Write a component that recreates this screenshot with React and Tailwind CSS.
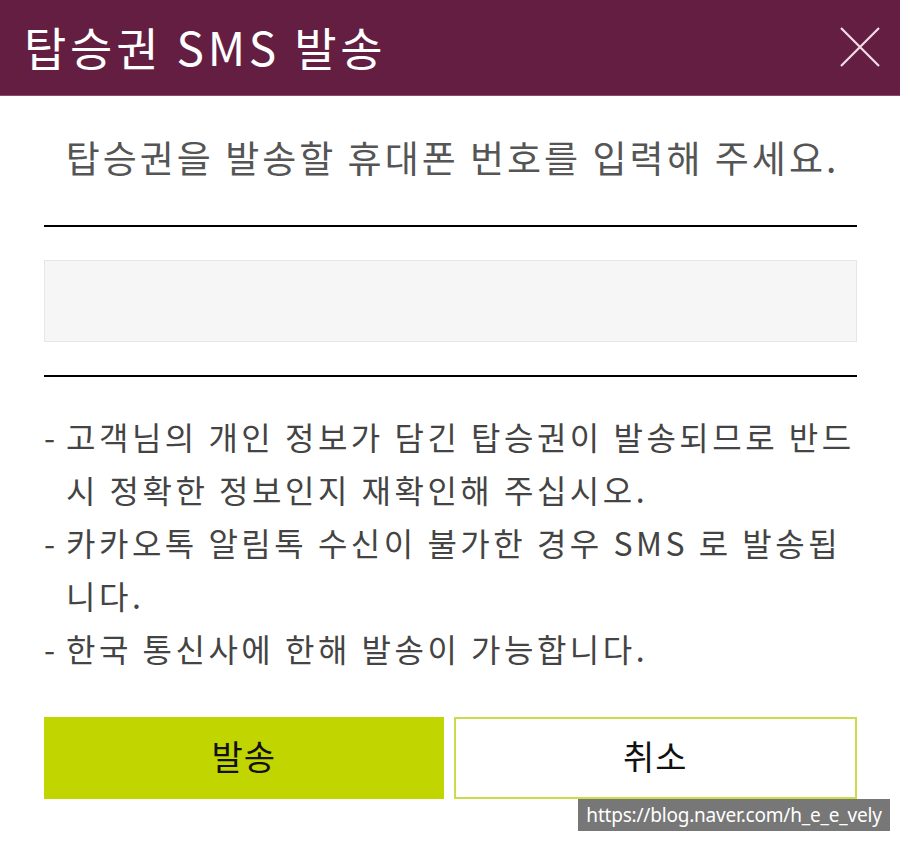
import React from 'react';

const notes = [
  ['고객님의 개인 정보가 담긴 탑승권이 발송되므로 반드', '시 정확한 정보인지 재확인해 주십시오.'],
  ['카카오톡 알림톡 수신이 불가한 경우 SMS 로 발송됩', '니다.'],
  ['한국 통신사에 한해 발송이 가능합니다.'],
];

const SmsDialog = () => {
  return (
    <div
      className="relative w-[900px] h-[841px] bg-white overflow-hidden"
      style={{ fontFamily: '"Noto Sans CJK KR", "Noto Sans", sans-serif' }}
    >
      {/* Header */}
      <div className="h-[96px] bg-[#641e42] border-b border-[#8a4a68] flex items-center justify-between pl-[24px] pr-[20px]">
        <h1 className="text-white text-[46px] leading-none tracking-[3.8px] pb-[4px]">탑승권 SMS 발송</h1>
        <svg width="40" height="40" viewBox="0 0 40 40" className="mb-[2px]">
          <path d="M1 1L39 39M39 1L1 39" stroke="#f4dce8" strokeWidth="2.2" />
        </svg>
      </div>

      <div className="px-[44px] pr-[43px]">
        {/* Prompt */}
        <p className="text-center text-[#555] text-[37px] leading-none tracking-[3px] pl-[4px] pt-[43px] pb-[49px] whitespace-nowrap">
          탑승권을 발송할 휴대폰 번호를 입력해 주세요.
        </p>

        <div className="h-[2px] bg-black" />
        <div className="py-[33px]">
          <input
            type="tel"
            className="block w-full h-[82px] bg-[#f6f6f6] border border-[#e6e6e6] outline-none px-4 text-[28px]"
          />
        </div>
        <div className="h-[2px] bg-black" />

        {/* Notes */}
        <div className="pt-[33px] text-[#444] text-[32px] leading-[53px] tracking-[3.5px] whitespace-nowrap">
          {notes.map((lines, i) => (
            <div key={i} className="flex">
              <span className="w-[22px] shrink-0 tracking-normal">-</span>
              <span>
                {lines.map((l, j) => (
                  <React.Fragment key={j}>
                    {j > 0 && <br />}
                    {l}
                  </React.Fragment>
                ))}
              </span>
            </div>
          ))}
        </div>

        {/* Buttons */}
        <div className="mt-[42px] flex gap-[10px]">
          <button className="flex-1 h-[82px] bg-[#c1d600] text-[#111] text-[34px] leading-none tracking-[1px] pb-[4px]">
            발송
          </button>
          <button className="flex-1 h-[82px] bg-white border-2 border-[#cbdb4a] text-[#111] text-[34px] leading-none tracking-[1px] pb-[4px]">
            취소
          </button>
        </div>
      </div>

      {/* Watermark */}
      <div
        className="absolute left-[578px] top-[799px] w-[312px] h-[32px] bg-[#777] text-white text-[19px] leading-[32px] tracking-[-0.2px] text-center"
        style={{ fontFamily: '"Noto Sans", sans-serif' }}
      >
        https://blog.naver.com/h_e_e_vely
      </div>
    </div>
  );
};

export default function App() {
  return <SmsDialog />;
}
